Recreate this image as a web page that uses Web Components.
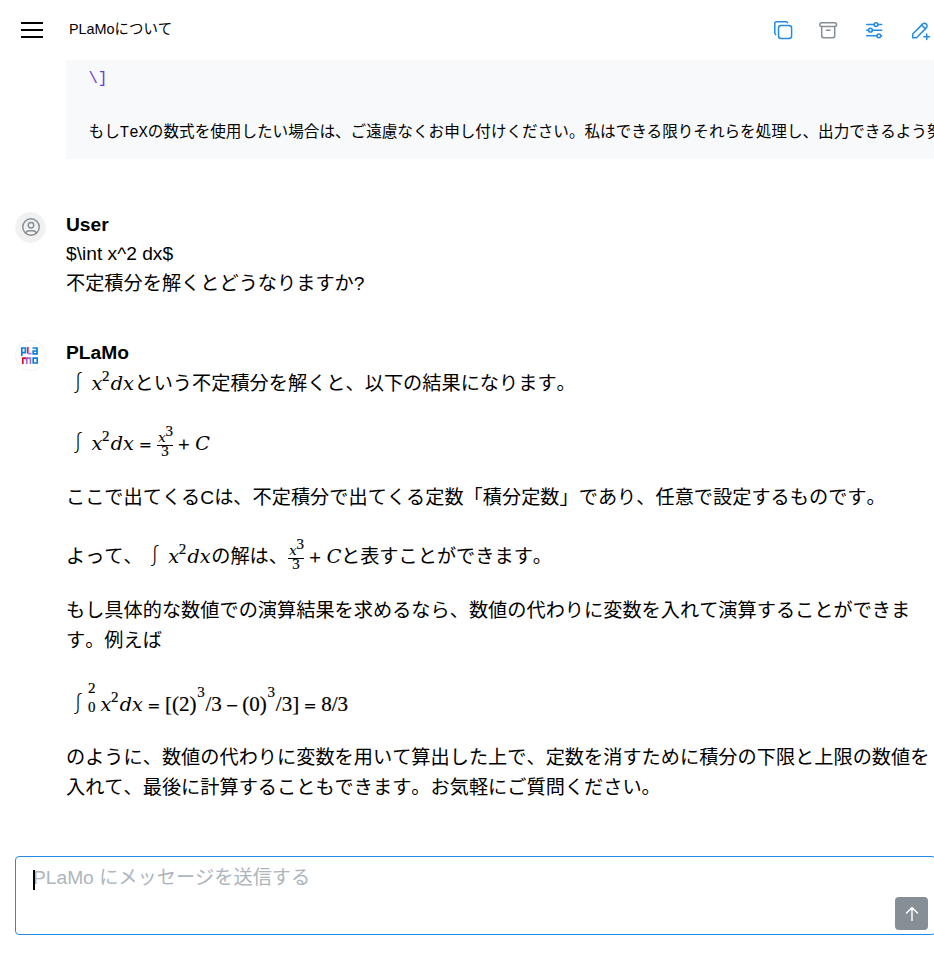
<!DOCTYPE html>
<html lang="ja">
<head>
<meta charset="utf-8">
<title>PLaMoについて</title>
<style>
  body {
    margin: 0;
    background: #fff;
    color: #000;
    font: 19.2px/1.55 "Liberation Sans", "Noto Sans CJK JP", sans-serif;
    font-kerning: none;
    overflow: hidden;
  }
  p {
    margin: 0 0 24.2px;
  }
  p.lead {
    padding-top: 2px;
    margin-bottom: 25px;
  }
  p.tall {
    padding-top: 5px;
  }
  p.limits {
    padding-top: 10.5px;
    margin-bottom: 23.2px;
  }
  p:last-child {
    margin: 0;
  }
</style>
</head>
<body>
<chat-app>
  <chat-header slot="header">PLaMoについて</chat-header>
  <code-block><span slot="accent">\]</span>もしTeXの数式を使用したい場合は、ご遠慮なくお申し付けください。私はできる限りそれらを処理し、出力できるよう努めます。</code-block>
  <chat-message name="User" role="user">$\int x^2 dx$<br>不定積分を解くとどうなりますか?</chat-message>
  <chat-message name="PLaMo" role="assistant">
    <p class="lead"><math-text><m-int>∫</m-int><m-var>x</m-var><m-sup>2</m-sup><m-var>d</m-var><m-var w="13">x</m-var></math-text>という不定積分を解くと、以下の結果になります。</p>
    <p class="tall"><math-text><m-int>∫</m-int><m-var>x</m-var><m-sup>2</m-sup><m-var>d</m-var><m-var>x</m-var><m-op w="23.5">=</m-op><m-frac><m-var slot="num">x</m-var><m-sup slot="num" rise="6">3</m-sup>3</m-frac><m-op w="21.5">+</m-op><m-var w="14.5">C</m-var></math-text></p>
    <p>ここで出てくるCは、不定積分で出てくる定数「積分定数」であり、任意で設定するものです。</p>
    <p class="tall">よって、<math-text><m-int>∫</m-int><m-var>x</m-var><m-sup>2</m-sup><m-var>d</m-var><m-var w="13">x</m-var></math-text>の解は、<math-text><m-frac><m-var slot="num">x</m-var><m-sup slot="num" rise="6">3</m-sup>3</m-frac><m-op w="22">+</m-op><m-var w="15">C</m-var></math-text>と表すことができます。</p>
    <p>もし具体的な数値での演算結果を求めるなら、数値の代わりに変数を入れて演算することができます。例えば</p>
    <p class="limits"><math-text><m-int>∫</m-int><m-limits><span slot="upper">2</span>0</m-limits><m-var>x</m-var><m-sup>2</m-sup><m-var>d</m-var><m-var>x</m-var><m-op w="22.5">=</m-op>[(2)<m-sup rise="14" w="9">3</m-sup>/3<m-op w="20.5">−</m-op>(0)<m-sup rise="14" w="9">3</m-sup>/3]<m-op w="22">=</m-op>8/3</math-text></p>
    <p>のように、数値の代わりに変数を用いて算出した上で、定数を消すために積分の下限と上限の数値を入れて、最後に計算することもできます。お気軽にご質問ください。</p>
  </chat-message>
  <chat-input slot="footer">PLaMo にメッセージを送信する</chat-input>
</chat-app>

<script>
const icons = {
  copy: '<path d="M7 9.667a2.667 2.667 0 0 1 2.667 -2.667h8.666a2.667 2.667 0 0 1 2.667 2.667v8.666a2.667 2.667 0 0 1 -2.667 2.667h-8.666a2.667 2.667 0 0 1 -2.667 -2.667z"/><path d="M4.012 16.737a2.005 2.005 0 0 1 -1.012 -1.737v-10c0 -1.1 .9 -2 2 -2h10c.75 0 1.158 .385 1.5 1"/>',
  archive: '<rect x="3" y="4" width="18" height="4" rx="2"/><path d="M5 8v10a2 2 0 0 0 2 2h10a2 2 0 0 0 2 -2v-10M10 12h4"/>',
  adjustments: '<circle cx="14" cy="6" r="2"/><path d="M4 6h8M16 6h4"/><circle cx="8" cy="12" r="2"/><path d="M4 12h2M10 12h10"/><circle cx="17" cy="18" r="2"/><path d="M4 18h11M19 18h1"/>',
  pencil: '<path d="M4 20h4l10.5 -10.5a2.828 2.828 0 1 0 -4 -4l-10.5 10.5v4M13.5 6.5l4 4M16 19h6M19 16v6"/>',
  user: '<circle cx="12" cy="12" r="9"/><circle cx="12" cy="10" r="3"/><path d="M6.168 18.849a4 4 0 0 1 3.832 -2.849h4a4 4 0 0 1 3.834 2.855"/>',
  arrow: '<path d="M12 5v14M18 11l-6 -6M6 11l6 -6"/>'
};

const logo = `
<svg viewBox="0 0 19 19" width="19" height="19" fill="none" stroke-width="1.7">
  <path stroke="#0b7fd6" d="M1.8 10V2H5.4V6.6H2"/>
  <path stroke="#e6194b" d="M7.8 1V7.6"/>
  <path stroke="#a46de0" d="M8 7.6H11.5"/>
  <path stroke="#0b7fd6" d="M12.5 2H17V7.8H13.2V5H17"/>
  <path stroke="#e00b20" d="M2.8 18V12.2H6.5V14.5"/>
  <path stroke="#a46de0" d="M6.8 18V12.2H10.4V18"/>
  <path stroke="#0b7fd6" d="M13.2 12.2H17.2V17H13.2Z"/>
</svg>`;

class AppIcon extends HTMLElement {
  constructor() {
    super();
    this.attachShadow({mode: "open"});
  }

  connectedCallback() {
    this.shadowRoot.innerHTML = `
      <style>
        :host { display: block; width: var(--size, 22.4px); height: var(--size, 22.4px); }
        svg { display: block; width: 100%; height: 100%; }
      </style>
      <svg viewBox="0 0 24 24" fill="none" stroke="currentColor" stroke-width="1.6"
        stroke-linecap="round" stroke-linejoin="round">${icons[this.getAttribute("name")]}</svg>
    `;
  }
}

class ChatApp extends HTMLElement {
  constructor() {
    super();
    this.attachShadow({mode: "open"});
    this.shadowRoot.innerHTML = `
      <style>
        :host { display: flex; flex-direction: column; height: 954px; overflow: hidden; }
        main { flex: 1; min-height: 0; overflow: hidden; }
      </style>
      <slot name="header"></slot>
      <main><slot></slot></main>
      <slot name="footer"></slot>
    `;
  }
}

class ChatHeader extends HTMLElement {
  constructor() {
    super();
    this.attachShadow({mode: "open"});
    this.shadowRoot.innerHTML = `
      <style>
        :host {
          display: flex; align-items: center; box-sizing: border-box; flex: none;
          height: 60px; padding: 0 3px 0 21px; font-size: 14.4px;
        }
        .burger { display: grid; gap: 5px; width: 22px; margin-right: 26px; }
        .burger i { height: 2px; background: #000; }
        .title { flex: 1; padding-bottom: 2px; }
        nav { display: flex; gap: 23.2px; color: #228be6; }
        .muted { color: #868e96; }
      </style>
      <div class="burger"><i></i><i></i><i></i></div>
      <div class="title"><slot></slot></div>
      <nav>
        <app-icon name="copy"></app-icon>
        <app-icon name="archive" class="muted"></app-icon>
        <app-icon name="adjustments"></app-icon>
        <app-icon name="pencil"></app-icon>
      </nav>
    `;
  }
}

class CodeBlock extends HTMLElement {
  constructor() {
    super();
    this.attachShadow({mode: "open"});
    this.shadowRoot.innerHTML = `
      <style>
        :host {
          display: block; box-sizing: border-box; height: 99px; margin: 0 0 50.7px 66px;
          padding: 6px 0 0 22.6px; background: #f8f9fa; overflow: hidden; white-space: nowrap;
          font: 15.6px/26.5px "Liberation Mono", "Noto Sans CJK JP", monospace;
        }
        .accent { height: 53.5px; color: #6f38d8; }
      </style>
      <div class="accent"><slot name="accent"></slot></div>
      <div><slot></slot></div>
    `;
  }
}

class ChatMessage extends HTMLElement {
  constructor() {
    super();
    this.attachShadow({mode: "open"});
  }

  connectedCallback() {
    const isUser = this.getAttribute("role") === "user";

    this.shadowRoot.innerHTML = `
      <style>
        :host { display: grid; grid-template-columns: 31px 1fr; column-gap: 20px; padding-left: 15px; margin-bottom: 38.8px; }
        .avatar {
          display: grid; place-items: center; box-sizing: border-box;
          width: 31px; height: 31px; margin-top: 2px; border-radius: 50%;
          border: 1px solid #f3f3f3; color: #868e96; --size: 22px;
        }
        .user { background: #f1f1f1; }
        .avatar svg { margin-left: -2px; }
        .name { font-weight: bold; }
      </style>
      <div class="avatar ${isUser ? "user" : ""}">${isUser ? '<app-icon name="user"></app-icon>' : logo}</div>
      <div>
        <div class="name">${this.getAttribute("name")}</div>
        <slot></slot>
      </div>
    `;
  }
}

// inline formula; no blanks around the slot, they would show up as gaps in the sentence
class MathText extends HTMLElement {
  constructor() {
    super();
    this.attachShadow({mode: "open"});
    this.shadowRoot.innerHTML = `<style>
        :host {
          display: inline; font-family: "Liberation Serif", serif; font-size: 21px;
          line-height: 0; white-space: nowrap; -webkit-text-stroke: .2px #000;
        }
      </style><slot></slot>`;
  }
}

class MathInt extends HTMLElement {
  constructor() {
    super();
    this.attachShadow({mode: "open"});
    this.shadowRoot.innerHTML = `
      <style>
        :host {
          display: inline-block; width: 24px; text-align: center; font-weight: 300;
          font-family: "Noto Sans CJK JP", sans-serif; -webkit-text-stroke: 0;
        }
      </style>
      <slot></slot>
    `;
  }
}

// operator or relation, centred in the space it takes
class MathOp extends HTMLElement {
  constructor() {
    super();
    this.attachShadow({mode: "open"});
  }

  connectedCallback() {
    this.shadowRoot.innerHTML = `
      <style>
        :host {
          display: inline-block; width: ${this.getAttribute("w")}px; text-align: center; vertical-align: 1px;
          font-family: "DejaVu Math TeX Gyre", "DejaVu Serif", serif; font-size: 15.5px;
        }
      </style>
      <slot></slot>
    `;
  }
}

class MathVar extends HTMLElement {
  constructor() {
    super();
    this.attachShadow({mode: "open"});
  }

  connectedCallback() {
    this.shadowRoot.innerHTML = `
      <style>
        :host {
          display: inline-block; width: ${(this.getAttribute("w") || 12) / 19.3}em;
          font-size: .92em; line-height: 0; -webkit-text-stroke: 0;
        }
        math { font-family: "DejaVu Math TeX Gyre", math; }
      </style>
      <math><mi>${this.textContent}</mi></math>
    `;
  }
}

class MathSup extends HTMLElement {
  constructor() {
    super();
    this.attachShadow({mode: "open"});
  }

  connectedCallback() {
    this.shadowRoot.innerHTML = `
      <style>
        :host {
          display: inline-block; width: ${this.getAttribute("w") || 7.5}px; text-align: center;
          font-size: 15px; line-height: 0; vertical-align: ${this.getAttribute("rise") || 9}px;
        }
      </style>
      <slot></slot>
    `;
  }
}

// the baseline of an inline-block is that of its last line, here the denominator
class MathFrac extends HTMLElement {
  constructor() {
    super();
    this.attachShadow({mode: "open"});
    this.shadowRoot.innerHTML = `
      <style>
        :host {
          display: inline-block; width: 16px; margin: -10px 0; vertical-align: -6px;
          text-align: center; font-size: 15px; white-space: nowrap;
        }
        .num { height: 14px; line-height: 12px; border-bottom: 1px solid #000; }
        .den { height: 11px; line-height: 11px; }
      </style>
      <div class="num"><slot name="num"></slot></div>
      <div class="den"><slot></slot></div>
    `;
  }
}

class MathLimits extends HTMLElement {
  constructor() {
    super();
    this.attachShadow({mode: "open"});
    this.shadowRoot.innerHTML = `
      <style>
        :host {
          display: inline-block; width: 11px; margin: -20px 0 0 -2px;
          vertical-align: -1px; font-size: 15px; line-height: 10px;
        }
        .upper { height: 19px; }
      </style>
      <div class="upper"><slot name="upper"></slot></div>
      <div><slot></slot></div>
    `;
  }
}

class ChatInput extends HTMLElement {
  constructor() {
    super();
    this.attachShadow({mode: "open"});
    this.shadowRoot.innerHTML = `
      <style>
        :host {
          display: flex; flex: none; justify-content: space-between; position: relative; box-sizing: border-box;
          height: 79px; margin: 0 -2px 19px 15px; padding: 5.5px 7px 4px 17px;
          border: 1px solid #228be6; border-radius: 4px; color: #adb5bd;
        }
        .caret { position: absolute; left: 17px; top: 13px; width: 2px; height: 20px; background: #000; }
        button {
          display: grid; place-items: center; align-self: flex-end; width: 33px; height: 33px;
          padding: 0; border: 0; border-radius: 4px; background: #868e96; color: #fff; --size: 22px;
        }
      </style>
      <div><slot></slot></div>
      <span class="caret"></span>
      <button aria-label="送信"><app-icon name="arrow"></app-icon></button>
    `;
  }
}

customElements.define("app-icon", AppIcon);
customElements.define("chat-app", ChatApp);
customElements.define("chat-header", ChatHeader);
customElements.define("code-block", CodeBlock);
customElements.define("math-text", MathText);
customElements.define("m-int", MathInt);
customElements.define("m-op", MathOp);
customElements.define("m-var", MathVar);
customElements.define("m-sup", MathSup);
customElements.define("m-frac", MathFrac);
customElements.define("m-limits", MathLimits);
customElements.define("chat-message", ChatMessage);
customElements.define("chat-input", ChatInput);
</script>
</body>
</html>
